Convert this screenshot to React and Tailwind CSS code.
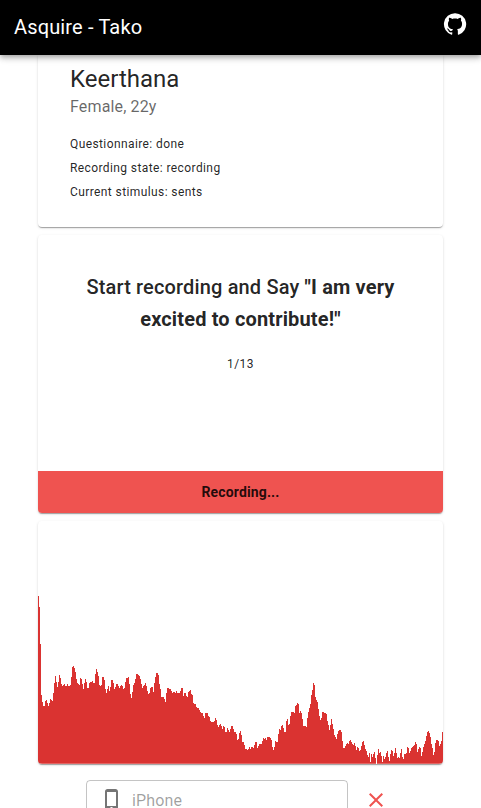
const spectrumTops = [
  596,607,644,695,702,706,706,701,700,703,706,703,699,700,701,693,683,676,682,687,
  682,675,678,684,686,685,684,686,686,684,686,686,685,677,667,666,668,672,679,683,
  684,685,678,679,684,689,683,679,682,688,688,683,682,682,681,683,683,674,669,672,
  676,685,686,685,677,677,680,689,693,689,686,691,687,680,680,683,689,687,684,684,
  686,688,686,685,686,689,688,682,678,678,677,684,694,698,692,685,683,679,674,674,
  675,676,679,684,688,686,685,683,686,691,694,693,688,687,687,692,683,677,673,673,
  675,684,689,697,697,697,699,702,693,688,688,689,689,691,693,692,692,693,691,693,
  693,693,691,688,688,696,693,693,696,697,692,691,690,694,695,703,704,704,707,708,
  708,710,712,713,713,716,718,713,713,713,716,717,721,722,722,722,721,718,720,725,
  727,725,724,726,729,726,727,732,732,728,730,732,729,726,726,729,732,732,734,740,
  739,733,731,735,742,742,745,749,749,750,749,747,749,747,747,748,745,742,742,748,
  746,744,744,744,741,738,739,738,740,737,737,737,738,740,747,750,747,741,742,742,
  734,729,730,726,725,728,732,732,721,719,725,724,716,712,712,712,713,706,705,703,
  704,713,711,713,719,726,726,726,727,718,712,708,704,695,690,683,685,697,700,702,
  709,716,720,718,712,712,713,713,714,721,725,730,725,719,724,729,735,737,739,734,
  731,730,730,732,741,748,748,746,744,743,744,741,740,742,744,745,743,746,750,747,
  748,751,750,746,742,741,745,749,751,755,757,753,762,754,757,754,752,758,764,755,
  749,753,752,756,762,756,759,757,753,751,757,761,754,750,751,756,753,748,753,758,
  757,758,753,749,757,759,754,754,753,747,748,753,751,748,747,746,745,742,744,752,
  749,747,748,756,752,747,744,741,736,732,731,733,737,744,748,755,752,743,740,740,
  741,746,744,741,732,
];

const TOP = 521;
const BASELINE = 242.75;

// One-pixel-wide bars joined into a single stepped area
const spectrumPath =
  `M0 ${BASELINE}` +
  spectrumTops.map((y, i) => `V${Math.min(y - TOP, BASELINE)}H${i + 1}`).join("") +
  `V${BASELINE}Z`;

const cardClass =
  "overflow-hidden rounded bg-white shadow-[0_2px_1px_-1px_rgba(0,0,0,0.2),0_1px_1px_0_rgba(0,0,0,0.14),0_1px_3px_0_rgba(0,0,0,0.12)]";

function GitHubIcon() {
  return (
    <svg className="size-6" viewBox="0 0 24 24" fill="currentColor">
      <path d="M12 1.27a11 11 0 00-3.48 21.46c.55.09.73-.28.73-.55v-1.84c-3.03.64-3.67-1.46-3.67-1.46-.55-1.29-1.28-1.65-1.28-1.65-.92-.65.1-.65.1-.65 1.1 0 1.73 1.1 1.73 1.1.92 1.65 2.57 1.2 3.21.92a2 2 0 01.64-1.47c-2.47-.27-5.04-1.19-5.04-5.5 0-1.1.46-2.1 1.2-2.84a3.76 3.76 0 010-2.93s.91-.28 3.11 1.1c1.8-.49 3.7-.49 5.5 0 2.1-1.38 3.02-1.1 3.02-1.1a3.76 3.76 0 01.1 2.93c.83.74 1.2 1.74 1.2 2.94 0 4.21-2.57 5.13-5.04 5.4.45.37.82.92.82 2.02v3.03c0 .27.1.64.73.55A11 11 0 0012 1.27" />
    </svg>
  );
}

function PhoneIcon() {
  return (
    <svg className="size-6 shrink-0 text-black/54" viewBox="0 0 24 24" fill="currentColor">
      <path d="M15.5 1h-8C6.12 1 5 2.12 5 3.5v17C5 21.88 6.12 23 7.5 23h8c1.38 0 2.5-1.12 2.5-2.5v-17C18 2.12 16.88 1 15.5 1zm-4 21c-.83 0-1.5-.67-1.5-1.5s.67-1.5 1.5-1.5 1.5.67 1.5 1.5-.67 1.5-1.5 1.5zm4.5-4H7V4h9v14z" />
    </svg>
  );
}

function CloseIcon() {
  return (
    <svg className="size-6" viewBox="0 0 24 24" fill="currentColor">
      <path d="M19 6.41L17.59 5 12 10.59 6.41 5 5 6.41 10.59 12 5 17.59 6.41 19 12 13.41 17.59 19 19 17.59 13.41 12z" />
    </svg>
  );
}

export default function App() {
  return (
    <div className="flex h-[808px] flex-col overflow-hidden bg-white font-[Roboto,sans-serif] text-black/87">
      <header className="z-10 flex h-[55px] shrink-0 items-center justify-between bg-black px-[14px] text-white shadow-[0_2px_4px_-1px_rgba(0,0,0,0.2),0_4px_5px_0_rgba(0,0,0,0.14),0_1px_10px_0_rgba(0,0,0,0.12)]">
        <h1 className="-mt-px text-xl leading-8 tracking-[0.15px]">Asquire - Tako</h1>
        <div className="-mt-[7px]">
          <GitHubIcon />
        </div>
      </header>

      <main className="mx-[38px] flex shrink-0 flex-col gap-2">
        <section className={`${cardClass} h-[172px] rounded-t-none px-8 pt-2`}>
          <h2 className="text-2xl leading-8">Keerthana</h2>
          <p className="text-base leading-6 tracking-[0.15px] text-black/60">Female, 22y</p>
          <div className="mt-[13px] text-xs leading-6 tracking-[0.4px]">
            <p>Questionnaire: done</p>
            <p>Recording state: recording</p>
            <p>Current stimulus: sents</p>
          </div>
        </section>

        <section className={`${cardClass} flex h-[278px] flex-col text-center`}>
          <div className="flex-1 px-8 pt-9">
            <p className="text-xl leading-8 font-medium tracking-[0.15px]">
              Start recording and Say <b className="font-bold">"I am very excited to contribute!"</b>
            </p>
            <p className="mt-[17px] text-xs leading-6 tracking-[0.4px]">1/13</p>
          </div>
          <div className="h-[42px] bg-[#ef5350] text-sm leading-[42px] font-bold tracking-[0.14px]">
            Recording...
          </div>
        </section>

        <section className={`${cardClass} h-[243px]`}>
          <svg className="block" width="405" height="243" viewBox="0 0 405 243">
            <path d={spectrumPath} fill="#da3331" />
          </svg>
        </section>

        <div className="mt-2 flex items-center justify-between pr-[55px] pl-12">
          <div className="flex h-10 w-[262px] items-center gap-2 rounded border border-black/23 pl-[13px] text-base">
            <PhoneIcon />
            <span className="pt-0.5 tracking-[0.15px] text-black/38">iPhone</span>
          </div>
          <button className="text-[#ef5350]" aria-label="Remove device">
            <CloseIcon />
          </button>
        </div>
      </main>
    </div>
  );
}
